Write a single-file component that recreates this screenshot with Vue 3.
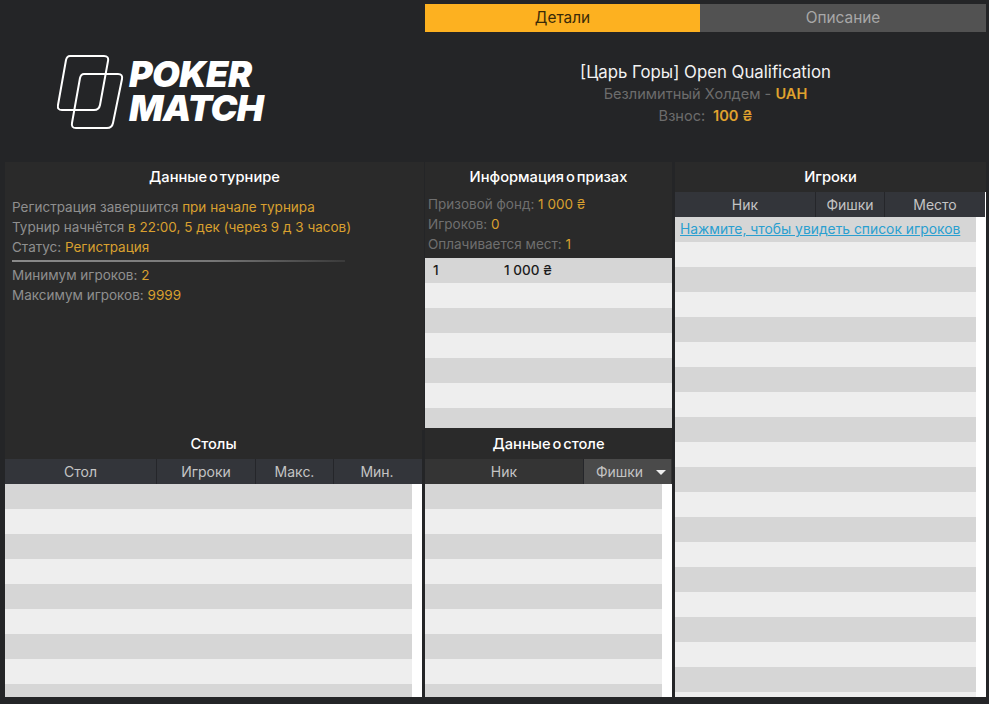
<template>
  <div class="lobby">
    <div class="top">
      <div class="logo">
        <svg class="logo-cards" width="68" height="76" viewBox="0 0 68 76" fill="none" stroke="#fff" stroke-width="2">
          <path d="M13 1H47Q52 1 51 6L43 50Q42 55 37 55H5Q0 55 1 50L9 5Q10 1 13 1Z" />
          <path d="M27 19H61Q66 19 65 24L56 68Q55 73 50 73H19Q14 73 15 68L23 23Q24 19 27 19Z" />
        </svg>
        <div class="logo-text">POKER<br />MATCH</div>
      </div>
      <div class="summary">
        <div class="tabs">
          <div class="tab active">Детали</div>
          <div class="tab">Описание</div>
        </div>
        <div class="tourney">
          <div class="tourney-name">[Царь Горы] Open Qualification</div>
          <div class="tourney-line">Безлимитный Холдем - <b>UAH</b></div>
          <div class="tourney-line">Взнос: <b>&nbsp;100 ₴</b></div>
        </div>
      </div>
    </div>

    <div class="panels">
      <section class="panel details">
        <h3>Данные о турнире</h3>
        <div class="info">
          <p>Регистрация завершится <span>при начале турнира</span></p>
          <p>Турнир начнётся <span>в 22:00, 5 дек (через 9 д 3 часов)</span></p>
          <p>Статус: <span>Регистрация</span></p>
          <div class="divider"></div>
          <p>Минимум игроков: <span>2</span></p>
          <p>Максимум игроков: <span>9999</span></p>
        </div>
      </section>

      <section class="panel prizes">
        <h3>Информация о призах</h3>
        <div class="info dim">
          <p>Призовой фонд: <span>1 000 ₴</span></p>
          <p>Игроков: <span>0</span></p>
          <p>Оплачивается мест: <span>1</span></p>
        </div>
        <div class="rows prize-rows">
          <div v-for="n in 7" :key="n" class="row">
            <template v-if="n === 1">
              <span class="place">1</span>
              <span>1 000 ₴</span>
            </template>
          </div>
        </div>
      </section>

      <section class="panel players">
        <h3>Игроки</h3>
        <div class="cols players-cols">
          <div>Ник</div>
          <div>Фишки</div>
          <div>Место</div>
        </div>
        <div class="rows scroll-rows">
          <div v-for="n in 20" :key="n" class="row">
            <a v-if="n === 1" class="show-link">Нажмите, чтобы увидеть список игроков</a>
          </div>
        </div>
      </section>

      <section class="panel tables">
        <h3>Столы</h3>
        <div class="cols tables-cols">
          <div>Стол</div>
          <div>Игроки</div>
          <div>Макс.</div>
          <div>Мин.</div>
        </div>
        <div class="rows scroll-rows">
          <div v-for="n in 9" :key="n" class="row"></div>
        </div>
      </section>

      <section class="panel seats">
        <h3>Данные о столе</h3>
        <div class="cols seats-cols">
          <div>Ник</div>
          <div class="sorted">Фишки<i class="caret"></i></div>
        </div>
        <div class="rows scroll-rows">
          <div v-for="n in 9" :key="n" class="row"></div>
        </div>
      </section>
    </div>
  </div>
</template>

<script setup>
</script>

<style>
html,
body {
  margin: 0;
  background: #242527;
}
</style>

<style scoped>
.lobby {
  width: 989px;
  height: 704px;
  overflow: hidden;
  background: #242527;
  font-family: Inter, "Liberation Sans", sans-serif;
  font-size: 14px;
  color: #fff;
}

.top {
  display: flex;
  height: 162px;
}

.logo {
  width: 425px;
  display: flex;
  padding: 55px 0 0 57px;
  box-sizing: border-box;
}

.logo-cards {
  flex: none;
}

.logo-text {
  margin: 2px 0 0 4px;
  font-size: 36px;
  line-height: 34px;
  letter-spacing: -0.6px;
  font-weight: 900;
  font-style: italic;
}

.summary {
  width: 561px;
  padding-top: 4px;
}

.tabs {
  display: grid;
  grid-template-columns: 275px 286px;
  height: 28px;
  line-height: 28px;
  text-align: center;
  font-size: 15.4px;
  color: #a8a8a8;
  background: #525252;
}

.tab.active {
  background: #fdb120;
  color: #3a2a08;
}

.tourney {
  padding-top: 29px;
  text-align: center;
  font-size: 14.6px;
  line-height: 22px;
  color: #6c6c6c;
}

.tourney-name {
  font-size: 16.8px;
  color: #f2f2f2;
}

.tourney b {
  font-weight: 600;
  color: #e0a22e;
}

.panels {
  display: grid;
  grid-template-columns: 420px 250px 311px;
  grid-template-rows: 268px 267px;
  margin-left: 5px;
}

.panel {
  display: flex;
  flex-direction: column;
  background: #2a2a2a;
  min-height: 0;
  overflow: hidden;
}

.players {
  grid-column: 3;
  grid-row: 1 / 3;
  background: #fff;
}

.tables {
  grid-column: 1;
  grid-row: 2;
  background: #fff;
  margin-right: 3px;
}

.seats {
  grid-column: 2;
  grid-row: 2;
  background: #fff;
  margin-right: 3px;
}

.panel h3 {
  margin: 0;
  flex: none;
  height: 30px;
  line-height: 31px;
  text-align: center;
  font-size: 14.7px;
  font-weight: 500;
  word-spacing: -2px;
  background: #2a2a2a;
}

.tables h3,
.seats h3 {
  height: 29px;
  line-height: 29px;
}

.details {
  margin-right: 1px;
}

.prizes {
  margin-right: 3px;
  padding-bottom: 2px;
}

.info {
  padding: 5px 0 0 7px;
  color: #8f8f8f;
  line-height: 20px;
  font-size: 13.5px;
}

.info.dim {
  padding: 2px 0 0 3px;
  color: #6f6f6f;
}

.info p {
  margin: 0;
}

.info span {
  color: #d9a02f;
}

.divider {
  width: 333px;
  height: 2px;
  margin: 3px 0 3px;
  background: linear-gradient(90deg, #8a8a8a, #777 60%, #3a3a3a);
}

.prize-rows {
  margin-top: 4px;
  flex: 1;
  min-height: 0;
  overflow: hidden;
}

.cols {
  display: grid;
  flex: none;
  height: 25px;
  line-height: 25px;
  text-align: center;
  color: #c4c4c4;
  background: #33353a;
}

.cols > div {
  border-left: 1px solid #25262a;
}

.cols > div:first-child {
  border-left: none;
}

.players-cols {
  grid-template-columns: 140px 69px 101px;
  margin-right: 1px;
}

.tables-cols {
  grid-template-columns: 151px 99px 78px 87px;
}

.seats-cols {
  grid-template-columns: 158px 88px;
  background: #343434;
}

.sorted {
  position: relative;
  background: #4a4a4a;
  padding-right: 16px;
}

.caret {
  position: absolute;
  right: 5px;
  top: 11px;
  border-left: 5px solid transparent;
  border-right: 5px solid transparent;
  border-top: 5px solid #eee;
}

.scroll-rows {
  margin-right: 10px;
}

.row {
  height: 25px;
  line-height: 25px;
  display: flex;
  background: #eeeeee;
  color: #1c1c1c;
  font-size: 13.5px;
  font-weight: 500;
}

.row:nth-child(odd) {
  background: #d6d6d6;
}

.place {
  box-sizing: border-box;
  width: 79px;
  padding-left: 8px;
  flex: none;
}

.show-link {
  padding-left: 5px;
  color: #2a9fd0;
  text-decoration: underline;
  font-size: 13.85px;
  font-weight: 400;
  white-space: nowrap;
}
</style>
